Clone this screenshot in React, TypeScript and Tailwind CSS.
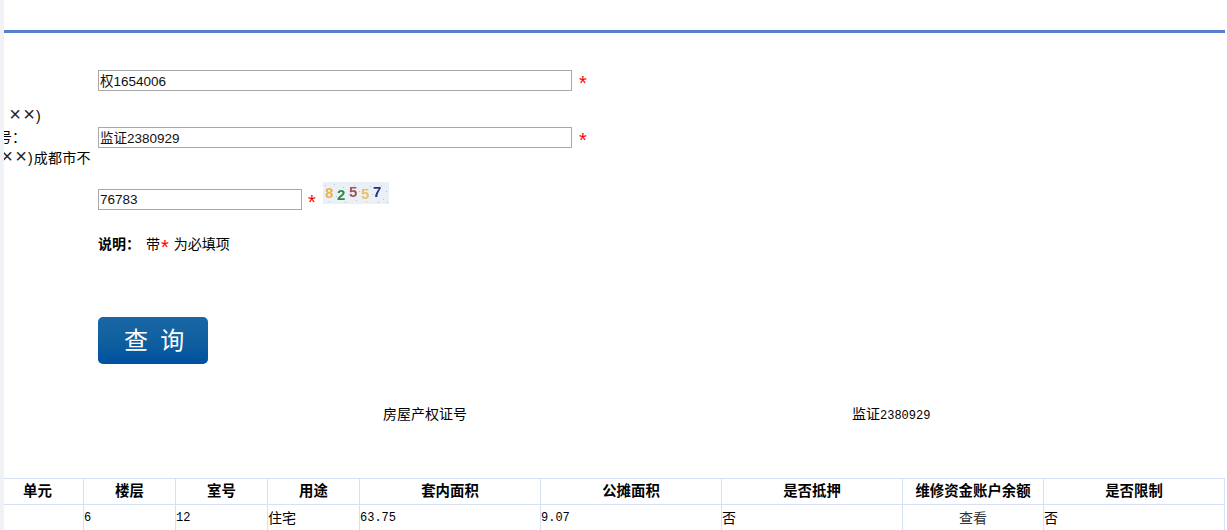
const noise = [
  [2, 3], [6, 19], [11, 2], [13, 14], [20, 5], [22, 20], [31, 3], [33, 18], [36, 9], [43, 19], [47, 4], [49, 12], [58, 3], [60, 17], [63, 9], [64, 20], [55, 20], [28, 12],
];

export default function App() {
  const sans = "font-['Liberation_Sans','Noto_Sans_CJK_SC',sans-serif]";
  const inputClass = "h-[21px] border border-[#a9a9a9] bg-white pl-px pr-0 pb-px text-[13.5px] leading-[18px] text-[#111] outline-none font-['Liberation_Sans','Noto_Sans_CJK_SC',sans-serif]";
  const star = <span className="text-[20px] leading-none text-[#ff0000]">*</span>;
  const cols = [92, 92, 92, 92, 181, 181, 181, 141, 181];
  const heads = ["单元", "楼层", "室号", "用途", "套内面积", "公摊面积", "是否抵押", "维修资金账户余额", "是否限制"];
  const mono = "font-['Liberation_Mono','Noto_Sans_CJK_SC',monospace] text-[12px]";
  const cell = "border border-[#d6e0f6] p-0 align-middle";
  const cross = <span className="inline-block w-[14px] text-center text-[20px] font-extralight leading-[14px] text-[#222]">×</span>;
  return (
    <div className={`flex h-[530px] w-[1227px] overflow-hidden bg-[#f1f2f5] text-[14px] leading-[21px] text-black ${sans}`}>
      <div className="w-[4px] shrink-0" />
      <div className="w-[1223px] shrink-0 overflow-hidden bg-white">
        <div className="h-[30px]" />
        <div className="h-[3px] w-[1221px] bg-[#587fcd]" />

        <div className="mt-[37px] flex h-[21px] items-center pl-[94px]">
          <input readOnly value="权1654006" className={`${inputClass} w-[474px]`} />
          <span className="ml-[7px] mt-[8px]">{star}</span>
        </div>

        <div className="flex h-[98px]">
          <div className="w-[94px] shrink-0 whitespace-nowrap pt-[15px]">
            <div className="pl-[4px]">{cross}{cross})</div>
            <div className="-ml-[6px]">号：</div>
            <div className="-ml-[4px]">{cross}{cross}<span>)</span><span className="ml-px tracking-[0.25px]">成都市不</span></div>
          </div>
          <div className="mt-[36px] flex h-[21px] items-center">
            <input readOnly value="监证2380929" className={`${inputClass} w-[474px]`} />
            <span className="ml-[7px] mt-[8px]">{star}</span>
          </div>
        </div>

        <div className="flex h-[21px] items-center pl-[94px]">
          <input readOnly value="76783" className={`${inputClass} w-[204px]`} />
          <span className="ml-[6px] mt-[8px]">{star}</span>
          <svg
            width="66"
            height="22"
            viewBox="0 0 66 22"
            className="-mt-[13px] ml-[7px] shrink-0 blur-[0.3px]"
            style={{ fontFamily: "Liberation Sans", fontWeight: 700 }}
          >
            <rect width="66" height="22" fill="#e9f0f8" />
            {noise.map(([x, y]) => (
              <rect key={`${x}-${y}`} x={x} y={y} width="1" height="1" fill="#b9c4c8" />
            ))}
            <text x="2" y="16" fontSize="15" fill="#f0b040">8</text>
            <text x="14" y="18" fontSize="15" fill="#2f8a3c">2</text>
            <text x="26" y="15" fontSize="15" fill="#a85050">5</text>
            <text x="38" y="17" fontSize="15" fill="#f0c060">5</text>
            <text x="50" y="15" fontSize="15" fill="#28307f">7</text>
          </svg>
        </div>

        <div className="mt-[24px] flex h-[21px] items-center pl-[94px]">
          <span className="font-bold">说明：</span>
          <span className="ml-[6px]">带</span>
          <span className="ml-px mt-[8px]">{star}</span>
          <span className="ml-[5px]">为必填项</span>
        </div>

        <div className="mt-[62px] pl-[94px]">
          <button className="flex h-[47px] w-[110px] items-center justify-center rounded-[5px] bg-gradient-to-b from-[#1a66a6] via-[#10609f] to-[#00509f] pl-[5px] text-[24px] tracking-[2.7px] text-white">
            查 询
          </button>
        </div>

        <div className="mt-[40px] flex h-[21px]">
          <div className="w-[840px] pl-[379px]">房屋产权证号</div>
          <div className="pl-[8px]">监证<span className={`${mono} text-[11.4px]`}>2380929</span></div>
        </div>

        <table className="-ml-[13px] mt-[53px] w-[1233px] table-fixed border-collapse">
          <colgroup>
            {cols.map((w, i) => <col key={i} style={{ width: w }} />)}
          </colgroup>
          <tbody>
            <tr className="h-[26px]">
              {heads.map((h) => (
                <th key={h} className={`${cell} text-center text-[14.4px] font-bold`}>{h}</th>
              ))}
            </tr>
            <tr className="h-[26px]">
              <td className={cell}></td>
              <td className={`${cell} ${mono} pt-[2px]`}>6</td>
              <td className={`${cell} ${mono} pt-[2px]`}>12</td>
              <td className={`${cell} pt-[2px]`}>住宅</td>
              <td className={`${cell} ${mono} pt-[2px]`}>63.75</td>
              <td className={`${cell} ${mono} pt-[2px]`}>9.07</td>
              <td className={`${cell} pt-[2px]`}>否</td>
              <td className={`${cell} pt-[2px] text-center text-[#333]`}>查看</td>
              <td className={`${cell} pt-[2px]`}>否</td>
            </tr>
          </tbody>
        </table>
      </div>
    </div>
  );
}
